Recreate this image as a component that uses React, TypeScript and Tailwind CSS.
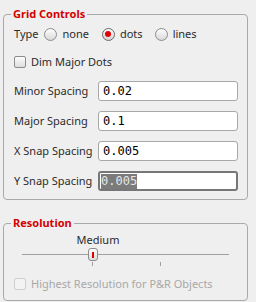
import React from 'react';

const ui = { fontFamily: '"Noto Sans", "DejaVu Sans", sans-serif' };
const mono = { fontFamily: '"DejaVu Sans Mono", "Liberation Mono", monospace' };

function Radio({ checked }: { checked?: boolean }) {
  return (
    <span
      className={
        checked
          ? 'w-[13px] h-[13px] rounded-full border border-[#6a6a6a] bg-gradient-to-b from-[#fdfdfd] to-[#d4d4d4] flex items-center justify-center shrink-0'
          : 'w-[13px] h-[13px] rounded-full border border-[#8c8c8c] bg-gradient-to-b from-[#fdfdfd] to-[#d9d9d9] flex items-center justify-center shrink-0'
      }
    >
      {checked && <span className="w-[6px] h-[6px] rounded-full bg-[#e00000]" />}
    </span>
  );
}

function Checkbox({ disabled }: { disabled?: boolean }) {
  return (
    <span
      className={
        disabled
          ? 'w-[12px] h-[12px] rounded-[2px] border border-[#cfcfcf] bg-[#f3f3f3] shrink-0'
          : 'w-[12px] h-[12px] rounded-[2px] border border-[#8c8c8c] bg-gradient-to-b from-[#fdfdfd] to-[#dcdcdc] shrink-0'
      }
    />
  );
}

function Field({ label, value, focused }: { label: string; value: string; focused?: boolean }) {
  return (
    <div className="flex items-center h-[20px]">
      <span className="w-[84px] text-[11px] text-[#2b2b2b]">{label}</span>
      {focused ? (
        <div className="w-[140px] h-[20px] rounded-[3px] border-2 border-[#777777] bg-white flex items-center pl-[1px]">
          <span className="bg-[#7b7b7b] text-[#e6e6e6] text-[12px] leading-[15px]" style={mono}>{value}</span>
        </div>
      ) : (
        <div className="w-[140px] h-[20px] rounded-[3px] border border-[#a8a8a8] bg-white flex items-center pl-[4px]">
          <span className="text-[12px] leading-[14px] text-black" style={mono}>{value}</span>
        </div>
      )}
    </div>
  );
}

export default function App() {
  return (
    <div className="w-[256px] h-[302px] bg-[#efefef] overflow-hidden pt-[6px]" style={ui}>
      {/* Grid Controls */}
      <fieldset className="ml-[3px] w-[245px] border border-[#a9a9a9] rounded-[4px] pl-[10px] pb-[8px]">
        <legend className="ml-[-3px] px-[2px] text-[11px] leading-[16px] font-bold text-[#d40000]">Grid Controls</legend>
        <div className="flex items-center h-[20px] mt-[2px] text-[11px] text-[#2b2b2b]">
          <span className="mr-[6px]">Type</span>
          <Radio />
          <span className="ml-[5px] mr-[13px]">none</span>
          <Radio checked />
          <span className="ml-[5px] mr-[12px]">dots</span>
          <Radio />
          <span className="ml-[5px]">lines</span>
        </div>
        <div className="flex items-center h-[20px] mt-[8px] text-[11px] text-[#2b2b2b]">
          <Checkbox />
          <span className="ml-[5px]">Dim Major Dots</span>
        </div>
        <div className="flex flex-col gap-[10px] mt-[9px]">
          <Field label="Minor Spacing" value="0.02" />
          <Field label="Major Spacing" value="0.1" />
          <Field label="X Snap Spacing" value="0.005" />
          <Field label="Y Snap Spacing" value="0.005" focused />
        </div>
      </fieldset>

      {/* Resolution */}
      <fieldset className="ml-[3px] mt-[15px] w-[245px] border border-[#a9a9a9] rounded-[4px] pl-[10px] pb-[8px]">
        <legend className="ml-[-3px] px-[2px] text-[11px] leading-[16px] font-bold text-[#d40000]">Resolution</legend>
        <div className="w-[207px] ml-[8px] text-[11px] text-[#2b2b2b] leading-[14px] mt-[2px]">
          <div className="w-[152px] text-center">Medium</div>
          <div className="relative h-[20px]">
            <div className="absolute left-0 right-0 top-[7px] h-px bg-[#a0a0a0]" />
            <div className="absolute left-[70px] top-[15px] w-px h-[4px] bg-[#a0a0a0]" />
            <div className="absolute left-[138px] top-[15px] w-px h-[4px] bg-[#a0a0a0]" />
            <div className="absolute left-[66px] top-[1px] w-[10px] h-[13px] rounded-[3px] border border-[#8c8c8c] bg-gradient-to-b from-[#fdfdfd] to-[#dcdcdc] flex items-center justify-center">
              <span className="w-[2px] h-[6px] bg-[#e00000]" />
            </div>
          </div>
        </div>
        <div className="flex items-center h-[16px] mt-[9px] text-[11px] text-[#a8a8a8]">
          <Checkbox disabled />
          <span className="ml-[5px]">Highest Resolution for P&amp;R Objects</span>
        </div>
      </fieldset>
    </div>
  );
}
